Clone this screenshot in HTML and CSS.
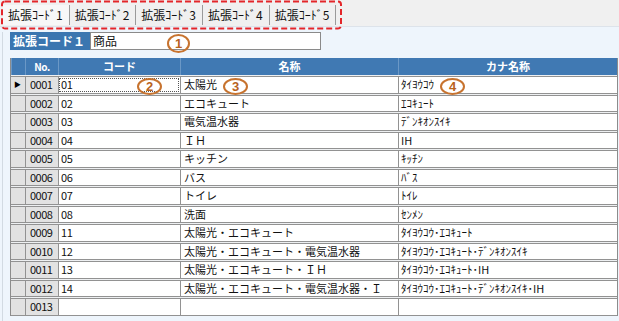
FILE: index.html
```html
<!DOCTYPE html>
<html lang="ja">
<head>
  <meta charset="UTF-8" />
  <title>拡張コード</title>
  <link rel="stylesheet" href="styles.css">
</head>
<body>

  <!-- Tabs -->
  <div class="tabbar">
    <div class="tab active">拡張ｺｰﾄﾞ1</div>
    <div class="tab">拡張ｺｰﾄﾞ2</div>
    <div class="tab">拡張ｺｰﾄﾞ3</div>
    <div class="tab">拡張ｺｰﾄﾞ4</div>
    <div class="tab">拡張ｺｰﾄﾞ5</div>
  </div>

  <div class="panel">
    <div class="keyrow">
      <div class="keylabel">拡張コード１</div>
      <div class="keyinput">商品</div>
    </div>

    <div class="grid">
      <div class="row head">
        <div class="c ind"></div>
        <div class="c no">No.</div>
        <div class="c">コード</div>
        <div class="c">名称</div>
        <div class="c">カナ名称</div>
      </div>
      <div class="row current">
        <div class="c ind">&#9654;</div>
        <div class="c no">0001</div>
        <div class="c code focus">01</div>
        <div class="c name">太陽光</div>
        <div class="c kana">ﾀｲﾖｳｺｳ</div>
      </div>
      <div class="row">
        <div class="c ind"></div><div class="c no">0002</div><div class="c code">02</div>
        <div class="c name">エコキュート</div><div class="c kana">ｴｺｷｭｰﾄ</div>
      </div>
      <div class="row">
        <div class="c ind"></div><div class="c no">0003</div><div class="c code">03</div>
        <div class="c name">電気温水器</div><div class="c kana">ﾃﾞﾝｷｵﾝｽｲｷ</div>
      </div>
      <div class="row">
        <div class="c ind"></div><div class="c no">0004</div><div class="c code">04</div>
        <div class="c name">ＩＨ</div><div class="c kana">IH</div>
      </div>
      <div class="row">
        <div class="c ind"></div><div class="c no">0005</div><div class="c code">05</div>
        <div class="c name">キッチン</div><div class="c kana">ｷｯﾁﾝ</div>
      </div>
      <div class="row">
        <div class="c ind"></div><div class="c no">0006</div><div class="c code">06</div>
        <div class="c name">バス</div><div class="c kana">ﾊﾞｽ</div>
      </div>
      <div class="row">
        <div class="c ind"></div><div class="c no">0007</div><div class="c code">07</div>
        <div class="c name">トイレ</div><div class="c kana">ﾄｲﾚ</div>
      </div>
      <div class="row">
        <div class="c ind"></div><div class="c no">0008</div><div class="c code">08</div>
        <div class="c name">洗面</div><div class="c kana">ｾﾝﾒﾝ</div>
      </div>
      <div class="row">
        <div class="c ind"></div><div class="c no">0009</div><div class="c code">11</div>
        <div class="c name">太陽光・エコキュート</div><div class="c kana">ﾀｲﾖｳｺｳ･ｴｺｷｭｰﾄ</div>
      </div>
      <div class="row">
        <div class="c ind"></div><div class="c no">0010</div><div class="c code">12</div>
        <div class="c name">太陽光・エコキュート・電気温水器</div><div class="c kana">ﾀｲﾖｳｺｳ･ｴｺｷｭｰﾄ･ﾃﾞﾝｷｵﾝｽｲｷ</div>
      </div>
      <div class="row">
        <div class="c ind"></div><div class="c no">0011</div><div class="c code">13</div>
        <div class="c name">太陽光・エコキュート・ＩＨ</div><div class="c kana">ﾀｲﾖｳｺｳ･ｴｺｷｭｰﾄ･IH</div>
      </div>
      <div class="row">
        <div class="c ind"></div><div class="c no">0012</div><div class="c code">14</div>
        <div class="c name">太陽光・エコキュート・電気温水器・Ｉ</div><div class="c kana">ﾀｲﾖｳｺｳ･ｴｺｷｭｰﾄ･ﾃﾞﾝｷｵﾝｽｲｷ･IH</div>
      </div>
      <div class="row">
        <div class="c ind"></div><div class="c no">0013</div><div class="c code"></div>
        <div class="c name"></div><div class="c kana"></div>
      </div>
    </div>
  </div>

  <!-- Annotations -->
  <svg class="mark" width="344" height="31">
    <rect x="2" y="1.5" width="339" height="27" rx="3" fill="none" stroke="#e3262a" stroke-width="2" stroke-dasharray="6 3" />
  </svg>
  <span class="num n1">1</span>
  <span class="num n2">2</span>
  <span class="num n3">3</span>
  <span class="num n4">4</span>

</body>
</html>
```

FILE: styles.css
```css
body {
  margin: 0;
  width: 619px;
  height: 321px;
  overflow: hidden;
  position: relative;
  background: #eef5fc;
  font-family: "Noto Sans CJK JP", sans-serif;
  font-size: 11px;
  color: #111;
}

/* Tabs */
.tabbar {
  display: flex;
  height: 27px;
  padding: 5px 0 0 3px;
  box-sizing: border-box;
  background: #f0f0f0;
  border-bottom: 1px solid #dde3ea;
}

.tab {
  height: 20px;
  line-height: 20px;
  padding: 0 6px 0 5px;
  font-size: 12px;
  border-right: 1px solid #9a9a9a;
  background: #f0f0f0;
}

.tab.active {
  background: #f7f7f7;
}

/* Panel */
.panel {
  margin-left: 2px;
  border-left: 1px solid #d2dae2;
  height: 294px;
}

.keyrow {
  display: flex;
  margin: 5px 0 0 7px;
}

.keylabel {
  width: 77px;
  height: 18px;
  line-height: 18px;
  padding-left: 3px;
  background: #3b76b0;
  color: #fff;
  font-weight: bold;
  font-size: 12px;
}

.keyinput {
  width: 227px;
  height: 16px;
  line-height: 16px;
  padding-left: 2px;
  border: 1px solid #8a8a8a;
  background: #fff;
  font-size: 12px;
}

/* Grid */
.grid {
  margin: 8px 0 0 7px;
  width: 608px;
  background: #eef0f2;
  border-left: 1px solid #8c8c8c;
  border-right: 1px solid #8c8c8c;
  box-sizing: border-box;
}

.row {
  display: grid;
  grid-template-columns: 14px 33px 122px 218px 219px;
  height: 17.5px;
  margin-top: 1px;
  box-sizing: border-box;
  border-top: 1px solid #929292;
  border-bottom: 1px solid #929292;
  background: #fff;
}

.row .c {
  overflow: hidden;
  white-space: nowrap;
  line-height: 15px;
  border-left: 1px solid #929292;
  padding-left: 2px;
}

.row .c:first-child {
  border-left: none;
}

.ind,
.no {
  background: #e2e2e2;
}

.row .ind {
  padding-left: 3px;
  font-size: 7px;
  line-height: 15px;
  color: #000;
}

.row .no {
  padding-left: 4px;
  letter-spacing: -0.5px;
}

.row .code {
  letter-spacing: -0.3px;
}

.row .name {
  padding-left: 3px;
}

.focus {
  outline: 1px dotted #555;
  outline-offset: -2px;
}

/* Header */
.row.head {
  height: 17px;
  margin-top: 0;
  border: none;
  background: #4079b3;
  color: #fff;
  font-weight: bold;
  text-align: center;
}

.row.head .c {
  line-height: 17px;
  border-left: 1px solid #6b98c6;
  padding-left: 0;
}

.row.head .ind {
  background: #4079b3;
}

.row.head .no {
  background: #4079b3;
  font-size: 10px;
  letter-spacing: -0.5px;
}

/* Annotations */
.mark {
  position: absolute;
  left: 0;
  top: 0;
}

.num {
  position: absolute;
  width: 21px;
  height: 13px;
  line-height: 13px;
  border: 2px solid #c7732f;
  border-radius: 50%;
  color: #b8621c;
  font-family: "Liberation Sans", sans-serif;
  font-weight: bold;
  font-size: 13px;
  text-align: center;
}

.n1 { left: 167px; top: 34px; width: 19px; height: 15px; line-height: 15px; }
.n2 { left: 137px; top: 78px; }
.n3 { left: 223px; top: 78px; }
.n4 { left: 440px; top: 78px; }
```
